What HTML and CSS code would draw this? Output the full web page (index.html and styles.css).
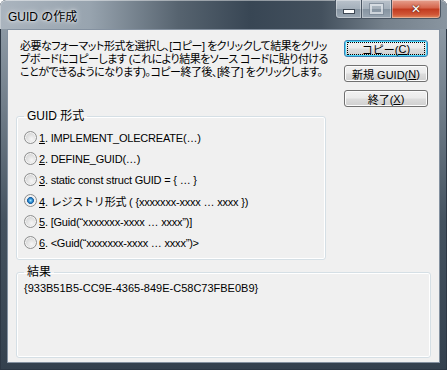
FILE: index.html
```html
<!DOCTYPE html>
<html lang="ja">
<head>
  <meta charset="UTF-8" />
  <title>GUID の作成</title>
  <link rel="stylesheet" href="styles.css">
</head>
<body>
  <div class="window">
    <div class="titlebar">
      <div class="title">GUID の作成</div>
      <div class="caption-buttons">
        <div class="cap cap-min"><span class="min-icon"></span></div>
        <div class="cap cap-max"><span class="max-icon"></span></div>
        <div class="cap cap-close"><span class="close-icon">✕</span></div>
      </div>
    </div>

    <div class="client">
      <div class="top">
        <div class="desc">
          <div>必要なフォーマット形式を選択し、[コピー] をクリックして結果をクリッ</div>
          <div>プボードにコピーします (これにより結果をソース コードに貼り付ける</div>
          <div>ことができるようになります)。コピー終了後、[終了] をクリックします。</div>
        </div>
        <div class="actions">
          <div class="btn btn-default"><span class="focus">コピー(<u>C</u>)</span></div>
          <div class="btn">新規 GUID(<u>N</u>)</div>
          <div class="btn">終了(<u>X</u>)</div>
        </div>
      </div>

      <fieldset class="group group-format">
        <legend>GUID 形式</legend>
        <div class="option"><span class="radio"></span><span><u>1</u>. IMPLEMENT_OLECREATE(…)</span></div>
        <div class="option"><span class="radio"></span><span><u>2</u>. DEFINE_GUID(…)</span></div>
        <div class="option"><span class="radio"></span><span><u>3</u>. static const struct GUID = { … }</span></div>
        <div class="option"><span class="radio checked"></span><span><u>4</u>. レジストリ形式 ( {xxxxxxx-xxxx … xxxx })</span></div>
        <div class="option"><span class="radio"></span><span><u>5</u>. [Guid(“xxxxxxx-xxxx … xxxx”)]</span></div>
        <div class="option"><span class="radio"></span><span><u>6</u>. &lt;Guid(“xxxxxxx-xxxx … xxxx”)&gt;</span></div>
      </fieldset>

      <fieldset class="group group-result">
        <legend>結果</legend>
        <div class="result">{933B51B5-CC9E-4365-849E-C58C73FBE0B9}</div>
      </fieldset>
    </div>
  </div>
</body>
</html>
```

FILE: styles.css
```css
body {
  margin: 0;
  font-family: 'Liberation Sans', 'Noto Sans CJK JP', sans-serif;
  font-size: 11px;
  color: #000;
  background: #fff;
}

.window {
  width: 447px;
  height: 370px;
  box-sizing: border-box;
  display: flex;
  flex-direction: column;
  border-radius: 6px 6px 0 0;
  background: linear-gradient(180deg, #97a3ae 0%, #6f7c88 30%, #44525f 60%, #34414e 100%);
  box-shadow: inset 0 0 0 1px #2c3744;
  overflow: hidden;
}

.titlebar {
  height: 29px;
  display: flex;
  justify-content: space-between;
  align-items: flex-start;
  border-radius: 6px 6px 0 0;
  background: linear-gradient(90deg, #aab4be 0%, #98a4af 20%, #56636f 40%, #384654 56%, #44515e 72%, #74808b 86%, #8995a0 100%);
  box-shadow: inset 0 1px 0 rgba(255,255,255,0.45), inset 1px 0 0 rgba(255,255,255,0.3);
}

.title {
  padding: 7px 0 0 8px;
  font-size: 12px;
  text-shadow: 0 0 6px rgba(255,255,255,0.9), 0 0 3px rgba(255,255,255,0.8);
}

.caption-buttons {
  display: flex;
  margin-right: 6px;
}

.cap {
  height: 18px;
  display: flex;
  justify-content: center;
  align-items: center;
  border: 1px solid #4a5562;
  border-top: none;
  box-shadow: inset 0 0 0 1px rgba(255,255,255,0.35);
}

.cap-min {
  width: 25px;
  border-radius: 0 0 0 4px;
  border-right: none;
  background: linear-gradient(180deg, #b9c2cb 0%, #a4afba 50%, #8593a0 50%, #9aa6b2 100%);
}

.cap-max {
  width: 29px;
  border-right: none;
  background: linear-gradient(180deg, #b9c2cb 0%, #a4afba 50%, #8593a0 50%, #9aa6b2 100%);
}

.cap-close {
  width: 48px;
  border-radius: 0 0 4px 0;
  background: linear-gradient(180deg, #e6a18f 0%, #d5634a 45%, #c13a1f 50%, #d05536 80%, #e08a5e 100%);
}

.min-icon {
  width: 10px;
  height: 3px;
  margin-top: 4px;
  background: #fff;
  border: 1px solid #3d4753;
}

.max-icon {
  width: 9px;
  height: 6px;
  border: 2px solid #e9edf1;
  outline: 1px solid #7a8694;
  opacity: 0.7;
}

.close-icon {
  color: #fff;
  font-family: 'DejaVu Sans', sans-serif;
  font-size: 12px;
  font-weight: bold;
  text-shadow: 0 0 1px #5a1f10, 0 0 2px #5a1f10;
}

.client {
  flex: 1;
  margin: 0 7px 7px 7px;
  border: 1px solid #8491a0;
  background: #f0f0f0;
  display: flex;
  flex-direction: column;
  padding: 0 0 4px 8px;
}

.top {
  display: flex;
  justify-content: space-between;
  padding: 9px 11px 0 4px;
  height: 70px;
}

.desc {
  padding-top: 1px;
  line-height: 13px;
  white-space: nowrap;
  letter-spacing: -0.5px;
  font-feature-settings: "palt";
}

.actions {
  flex-shrink: 0;
  display: flex;
  flex-direction: column;
  gap: 8px;
  padding-top: 1px;
}

.btn {
  width: 84px;
  height: 17px;
  box-sizing: border-box;
  display: flex;
  justify-content: center;
  align-items: center;
  border: 1px solid #707070;
  border-radius: 3px;
  background: linear-gradient(180deg, #f2f2f2 0%, #ebebeb 48%, #dddddd 52%, #cfcfcf 100%);
  font-size: 11px;
  box-shadow: inset 0 0 0 1px #fcfcfc;
}

.btn-default {
  border-color: #3c7fb1;
  box-shadow: inset 0 0 0 1px #48d8fb;
}

.focus {
  width: 76px;
  height: 11px;
  display: flex;
  justify-content: center;
  align-items: center;
  outline: 1px dotted #000;
}

.group {
  margin: 0;
  border: 1px solid #d5dfe5;
  border-radius: 3px;
  box-shadow: inset 0 0 0 1px #fff;
  padding: 4px 7px 6px 7px;
}

.group legend {
  padding: 0 3px;
  font-size: 12px;
  line-height: 14px;
}

.group-format {
  width: 310px;
  box-sizing: border-box;
}

.option {
  height: 21px;
  display: flex;
  align-items: center;
  gap: 2px;
  white-space: nowrap;
  letter-spacing: -0.2px;
}

.radio {
  width: 11px;
  height: 11px;
  border: 1px solid #8e8f8f;
  border-radius: 50%;
  background: radial-gradient(circle at 60% 65%, #f6f6f6 0%, #dcdcdc 55%, #c8c8c8 100%);
  box-shadow: inset 0 0 0 1px #f4f4f4;
}

.radio.checked {
  background: radial-gradient(circle at 50% 50%, #9fe2ff 0%, #2e8ed0 25%, #1b5c9e 40%, #f2f2f2 48%, #dcdcdc 100%);
}

.group-result {
  flex: 1;
  width: 415px;
  box-sizing: border-box;
  margin-top: 5px;
  padding-top: 3px;
}

.result {
  white-space: nowrap;
}
```
